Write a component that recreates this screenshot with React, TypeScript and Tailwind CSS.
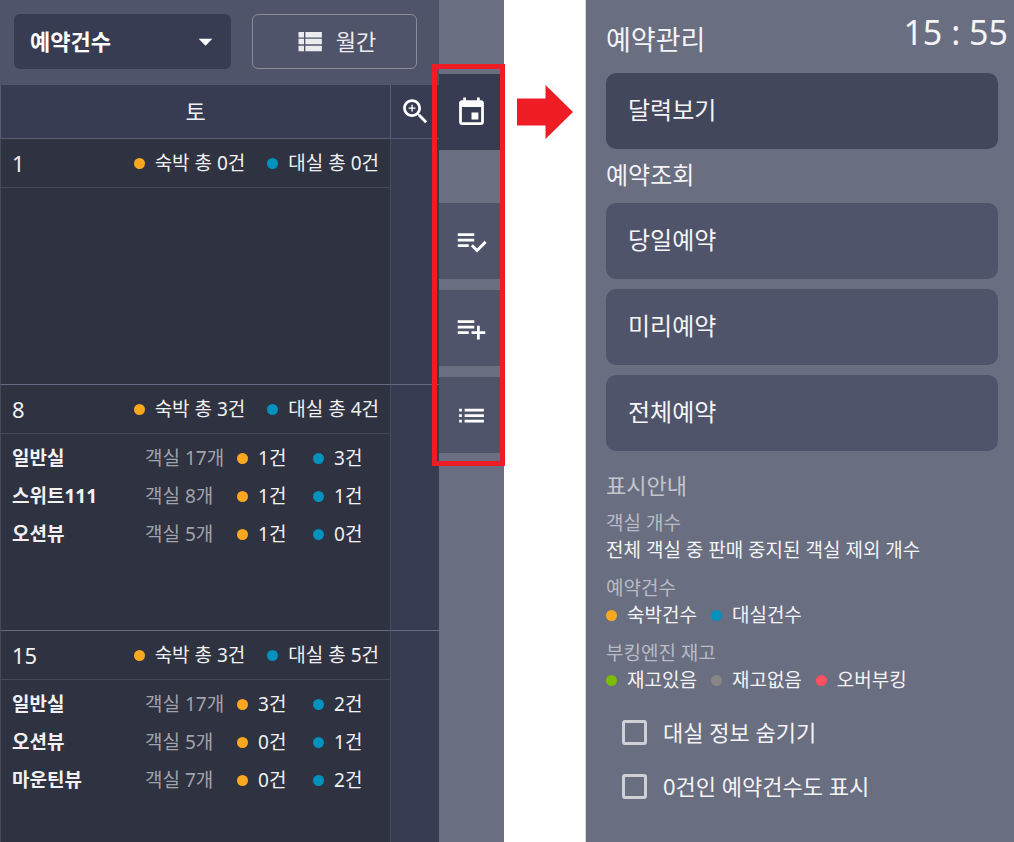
import { useState } from "react";

const ICONS = {
  dropDown: "M7 10l5 5 5-5z",
  viewList: "M4 14h4v-4H4v4zm0 5h4v-4H4v4zM4 9h4V5H4v4zm5 5h12v-4H9v4zm0 5h12v-4H9v4zM9 5v4h12V5H9z",
  zoomIn:
    "M15.5 14h-.79l-.28-.27C15.41 12.59 16 11.11 16 9.5 16 5.91 13.09 3 9.5 3S3 5.91 3 9.5 5.91 16 9.5 16c1.61 0 3.09-.59 4.23-1.57l.27.28v.79l5 4.99L20.49 19l-4.99-5zm-6 0C7.01 14 5 11.99 5 9.5S7.01 5 9.5 5 14 7.01 14 9.5 11.99 14 9.5 14zM12 10h-2v2H9v-2H7V9h2V7h1v2h2v1z",
  event:
    "M17 12h-5v5h5v-5zM16 1v2H8V1H6v2H5c-1.11 0-1.99.9-1.99 2L3 19c0 1.1.89 2 2 2h14c1.1 0 2-.9 2-2V5c0-1.1-.9-2-2-2h-1V1h-2zm3 18H5V8h14v11z",
  listCheck:
    "M14 10H2v2h12v-2zm0-4H2v2h12V6zM2 16h8v-2H2v2zm19.5-4.5L23 13l-6.99 7-4.51-4.5L13 14l3.01 3 5.49-5.5z",
  listAdd: "M14 10H2v2h12v-2zm0-4H2v2h12V6zm4 8v-4h-2v4h-4v2h4v4h2v-4h4v-2h-4zM2 16h8v-2H2v2z",
  list: "M3 13h2v-2H3v2zm0 4h2v-2H3v2zm0-8h2V7H3v2zm4 4h14v-2H7v2zm0 4h14v-2H7v2zM7 7v2h14V7H7z",
};

const days = [
  { day: 1, stay: 0, rent: 0, rooms: [] },
  {
    day: 8,
    stay: 3,
    rent: 4,
    rooms: [
      { name: "일반실", count: 17, stay: 1, rent: 3 },
      { name: "스위트111", count: 8, stay: 1, rent: 1 },
      { name: "오션뷰", count: 5, stay: 1, rent: 0 },
    ],
  },
  {
    day: 15,
    stay: 3,
    rent: 5,
    rooms: [
      { name: "일반실", count: 17, stay: 3, rent: 2 },
      { name: "오션뷰", count: 5, stay: 0, rent: 1 },
      { name: "마운틴뷰", count: 7, stay: 0, rent: 2 },
    ],
  },
];

const views = [
  { id: "calendar", label: "달력보기", icon: ICONS.event },
  { id: "today", label: "당일예약", icon: ICONS.listCheck },
  { id: "advance", label: "미리예약", icon: ICONS.listAdd },
  { id: "all", label: "전체예약", icon: ICONS.list },
];

function Icon({ d }: { d: string }) {
  return (
    <svg viewBox="0 0 24 24" fill="currentColor" className="w-[33px] h-[33px] shrink-0" aria-hidden="true">
      <path d={d} />
    </svg>
  );
}

function Dot({ color, children }: { color: string; children: React.ReactNode }) {
  return (
    <span className="flex items-center gap-[10px] whitespace-nowrap">
      <span className={`w-[11px] h-[11px] rounded-full shrink-0 ${color}`} />
      {children}
    </span>
  );
}

function DayCell({ data }: { data: (typeof days)[0] }) {
  return (
    <>
      <div className="flex items-center justify-between h-[49px] pl-[11px] pr-[11px] border-b border-[#464957]">
        <span className="text-[22px]">{data.day}</span>
        <div className="flex gap-[22px]">
          <Dot color="bg-[#fba81f]">숙박 총 {data.stay}건</Dot>
          <Dot color="bg-[#0091be]">대실 총 {data.rent}건</Dot>
        </div>
      </div>
      <ul className="pt-[5px] pl-[11px]">
        {data.rooms.map((room) => (
          <li key={room.name} className="grid grid-cols-[133px_92px_76px_1fr] items-center h-[38px] whitespace-nowrap">
            <span className="font-bold">{room.name}</span>
            <span className="text-[#a2a3aa]">객실 {room.count}개</span>
            <Dot color="bg-[#fba81f]">{room.stay}건</Dot>
            <Dot color="bg-[#0091be]">{room.rent}건</Dot>
          </li>
        ))}
      </ul>
    </>
  );
}

function Calendar() {
  return (
    <section className="min-w-0 bg-[#50546a]">
      <div className="flex gap-[21px] h-[85px] pt-[14px] pb-4 pl-[14px] pr-[22px]">
        <div className="relative flex-[218]">
          <select aria-label="표시 항목" className="appearance-none w-full h-full pl-4 rounded-md bg-[#383c53] text-[22px] font-bold">
            <option>예약건수</option>
          </select>
          <span className="absolute right-[9px] inset-y-0 flex items-center pointer-events-none">
            <Icon d={ICONS.dropDown} />
          </span>
        </div>
        <button className="flex-[164] flex items-center justify-center gap-[10px] rounded-md border border-[#888b9a] text-[22px] text-[#ececee]">
          <Icon d={ICONS.viewList} />
          월간
        </button>
      </div>
      <table className="w-full table-fixed border-separate border-spacing-0 text-[#f1f1f3]">
        <thead>
          <tr className="h-[54px] bg-[#383c53]">
            <th className="border-b border-l border-[#5a5e74] text-[22px] font-normal">토</th>
            <th className="w-[49px] border-b border-l border-[#5a5e74] text-white">
              <button aria-label="확대" className="flex justify-center w-full">
                <Icon d={ICONS.zoomIn} />
              </button>
            </th>
          </tr>
        </thead>
        <tbody>
          {days.map((data) => (
            <tr key={data.day} className="h-[246px]">
              <td className="align-top border-b border-l border-b-[#666a80] border-l-[#464957] bg-[#2f3241]">
                <DayCell data={data} />
              </td>
              <td className="border-b border-l border-b-[#666a80] border-l-[#464957] bg-[#383c53]" />
            </tr>
          ))}
        </tbody>
      </table>
    </section>
  );
}

function SideRail({ view, onSelect }: { view: string; onSelect: (id: string) => void }) {
  return (
    <nav className="relative flex flex-col gap-[11px] pt-[74px] bg-[#6a6e81]">
      {views.map(({ id, label, icon }) => (
        <button
          key={id}
          aria-label={label}
          onClick={() => onSelect(id)}
          className={`flex items-center justify-center h-[76px] first:mb-[42px] ${view === id ? "bg-[#383c53]" : "bg-[#50546a]"}`}
        >
          <Icon d={icon} />
        </button>
      ))}
      <div className="absolute top-16 -left-[7px] -right-px h-[402px] border-[5px] border-[#ee1c24] pointer-events-none" />
    </nav>
  );
}

function MenuButton({ label, active, onClick }: { label: string; active: boolean; onClick: () => void }) {
  return (
    <button
      onClick={onClick}
      className={`w-full h-[76px] px-[22px] pb-[2px] rounded-[10px] text-left text-2xl ${active ? "bg-[#43475b]" : "bg-[#50546a]"}`}
    >
      {label}
    </button>
  );
}

function ReservationPanel({ view, onSelect }: { view: string; onSelect: (id: string) => void }) {
  const [calendar, ...lists] = views;
  return (
    <aside className="min-w-0 pl-5 pr-4 bg-[#6a6e81] text-[#f4f4f6]">
      <header className="flex justify-between h-[73px] -mr-[10px]">
        <h1 className="pt-5 text-[27px] leading-10">예약관리</h1>
        <time className="pt-3 text-[34px] leading-10">15 : 55</time>
      </header>
      <MenuButton label={calendar.label} active={view === calendar.id} onClick={() => onSelect(calendar.id)} />
      <h2 className="pb-[2px] text-2xl leading-[52px]">예약조회</h2>
      <div className="flex flex-col gap-[10px]">
        {lists.map(({ id, label }) => (
          <MenuButton key={id} label={label} active={view === id} onClick={() => onSelect(id)} />
        ))}
      </div>

      <h2 className="mt-5 text-[22px] leading-7 text-[#c3c5cd]">표시안내</h2>
      <dl className="leading-[27px]">
        <dt className="mt-[11px] text-[#b9bbc5]">객실 개수</dt>
        <dd>전체 객실 중 판매 중지된 객실 제외 개수</dd>
        <dt className="mt-[11px] text-[#b9bbc5]">예약건수</dt>
        <dd className="flex gap-[14px]">
          <Dot color="bg-[#fba81f]">숙박건수</Dot>
          <Dot color="bg-[#0091be]">대실건수</Dot>
        </dd>
        <dt className="mt-[11px] text-[#b9bbc5]">부킹엔진 재고</dt>
        <dd className="flex gap-[14px]">
          <Dot color="bg-[#7bbd00]">재고있음</Dot>
          <Dot color="bg-[#868686]">재고없음</Dot>
          <Dot color="bg-[#ff5060]">오버부킹</Dot>
        </dd>
      </dl>

      <div className="pt-[11px] pl-4 text-[22px]">
        {["대실 정보 숨기기", "0건인 예약건수도 표시"].map((label) => (
          <label key={label} className="flex items-center gap-4 h-[54px] whitespace-nowrap">
            <input
              type="checkbox"
              className="appearance-none w-[25px] h-[25px] border-[3px] border-[#cfd0d6] rounded-[3px] checked:bg-[#cfd0d6]"
            />
            {label}
          </label>
        ))}
      </div>
    </aside>
  );
}

export default function App() {
  const [view, setView] = useState("calendar");

  return (
    <main className="grid grid-cols-[439fr_65px_82px_428fr] h-screen overflow-hidden bg-white text-white text-[19px] font-['Noto_Sans','Noto_Sans_CJK_KR',sans-serif]">
      <Calendar />
      <SideRail view={view} onSelect={setView} />
      <div className="flex justify-center pt-[85px] border-r border-[#d5d6dc]">
        <svg viewBox="0 0 56 54" className="w-14 h-[54px]" aria-hidden="true">
          <path d="M0 13.5h28.500V0L56 27 28.500 54V40.500H0z" fill="#ee1c24" />
        </svg>
      </div>
      <ReservationPanel view={view} onSelect={setView} />
    </main>
  );
}
